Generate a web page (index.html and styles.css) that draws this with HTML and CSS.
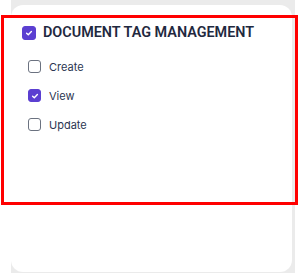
FILE: index.html
```html
<!DOCTYPE html>
<html lang="en">
<head>
  <meta charset="UTF-8" />
  <meta name="viewport" content="width=device-width, initial-scale=1.0"/>
  <title>Document Tag Management</title>
  <link rel="stylesheet" href="styles.css">
</head>
<body>
  <div class="panel">
    <div class="card">
      <label class="group-head">
        <span class="box checked">
          <svg viewBox="0 0 10 10"><path d="M2.6 5.2 L4.3 6.8 L7.4 3.6" /></svg>
        </span>
        <span class="group-title">DOCUMENT TAG MANAGEMENT</span>
      </label>
      <div class="options">
        <label class="option">
          <span class="box small"></span>
          <span>Create</span>
        </label>
        <label class="option">
          <span class="box small checked">
            <svg viewBox="0 0 10 10"><path d="M2.6 5.2 L4.3 6.8 L7.4 3.6" /></svg>
          </span>
          <span>View</span>
        </label>
        <label class="option">
          <span class="box small"></span>
          <span>Update</span>
        </label>
      </div>
    </div>
  </div>
  <div class="highlight"></div>
</body>
</html>
```

FILE: styles.css
```css
* {
  box-sizing: border-box;
}

body {
  margin: 0;
  background: #fff;
  font-family: Inter, 'Noto Sans', sans-serif;
  position: relative;
  width: 299px;
  height: 273px;
  overflow: hidden;
}

.panel {
  margin-left: 11px;
  width: 284px;
  height: 273px;
  background: #ebebeb;
  padding: 5px 3px 1px 0;
}

.card {
  background: #fff;
  border-radius: 12px;
  height: 100%;
  padding: 19px 11px;
}

.group-head {
  display: flex;
  align-items: center;
  gap: 7px;
}

.group-title {
  font-family: Roboto, sans-serif;
  font-size: 14.4px;
  font-weight: 600;
  color: #1f2940;
}

.box {
  width: 14px;
  height: 14px;
  border-radius: 3px;
  border: 1.5px solid #6b7280;
  display: flex;
  align-items: center;
  justify-content: center;
  flex-shrink: 0;
}

.box.small {
  width: 13px;
  height: 13px;
}

.box.checked {
  background: #5b3fd1;
  border-color: #5b3fd1;
}

.box svg {
  width: 10px;
  height: 10px;
  fill: none;
  stroke: #fff;
  stroke-width: 1.4;
  stroke-linecap: round;
  stroke-linejoin: round;
}

.options {
  display: flex;
  flex-direction: column;
  gap: 16px;
  padding: 19px 0 0 6px;
}

.option {
  display: flex;
  align-items: center;
  gap: 8px;
  font-size: 11px;
  color: #2b3652;
  height: 13px;
}

.highlight {
  position: absolute;
  left: 1px;
  top: 15px;
  width: 297px;
  height: 190px;
  border: 3px solid #ff0000;
}
```
